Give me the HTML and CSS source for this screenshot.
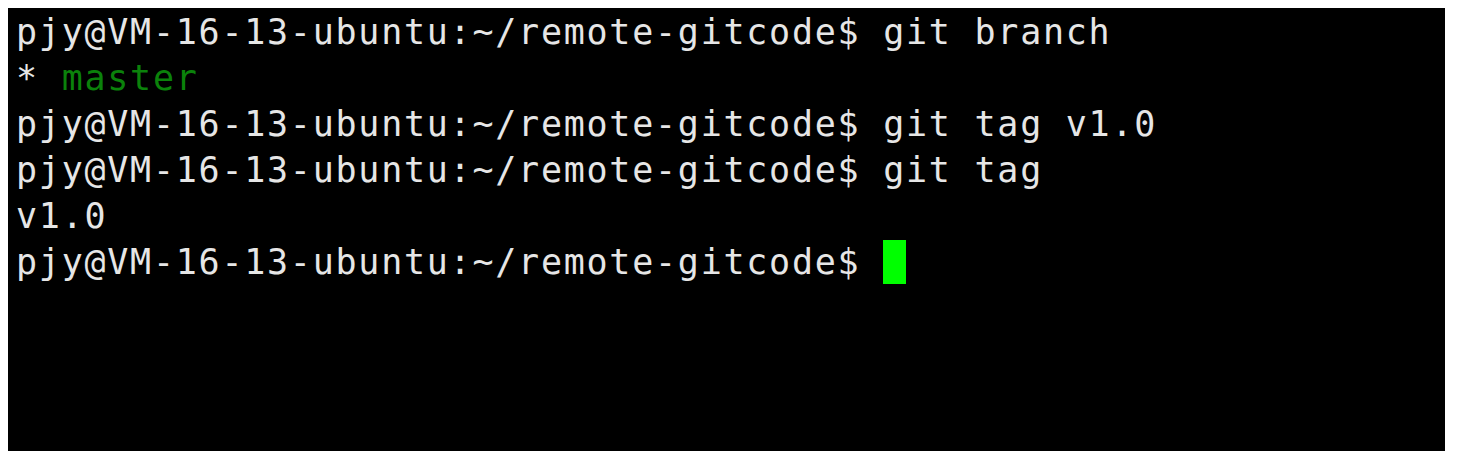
FILE: index.html
```html
<!DOCTYPE html>
<html>
<head>
<meta charset="utf-8">
<link rel="stylesheet" href="styles.css">
</head>
<body>
<div class="term">
<div class="line">pjy@VM-16-13-ubuntu:~/remote-gitcode$ git branch</div>
<div class="line">* <span class="green">master</span></div>
<div class="line">pjy@VM-16-13-ubuntu:~/remote-gitcode$ git tag v1.0</div>
<div class="line">pjy@VM-16-13-ubuntu:~/remote-gitcode$ git tag</div>
<div class="line">v1.0</div>
<div class="line">pjy@VM-16-13-ubuntu:~/remote-gitcode$ <span class="cursor"></span></div>
</div>
</body>
</html>
```
FILE: styles.css
```css
html, body {
  margin: 0;
  padding: 0;
  background: #ffffff;
}
body {
  padding: 8px;
}
.term {
  width: 1437px;
  height: 443px;
  box-sizing: border-box;
  background: #000000;
  padding: 1px 0 0 8px;
  color: #e6e6e6;
  font-family: "DejaVu Sans Mono", monospace;
  font-size: 35px;
  letter-spacing: 1.75px;
  line-height: 46px;
}
.line {
  white-space: pre;
  height: 46px;
}
.green {
  color: #0b820b;
}
.cursor {
  display: inline-block;
  width: 23px;
  height: 44px;
  background: #00ff00;
  vertical-align: top;
  margin-top: 1px;
}
```
